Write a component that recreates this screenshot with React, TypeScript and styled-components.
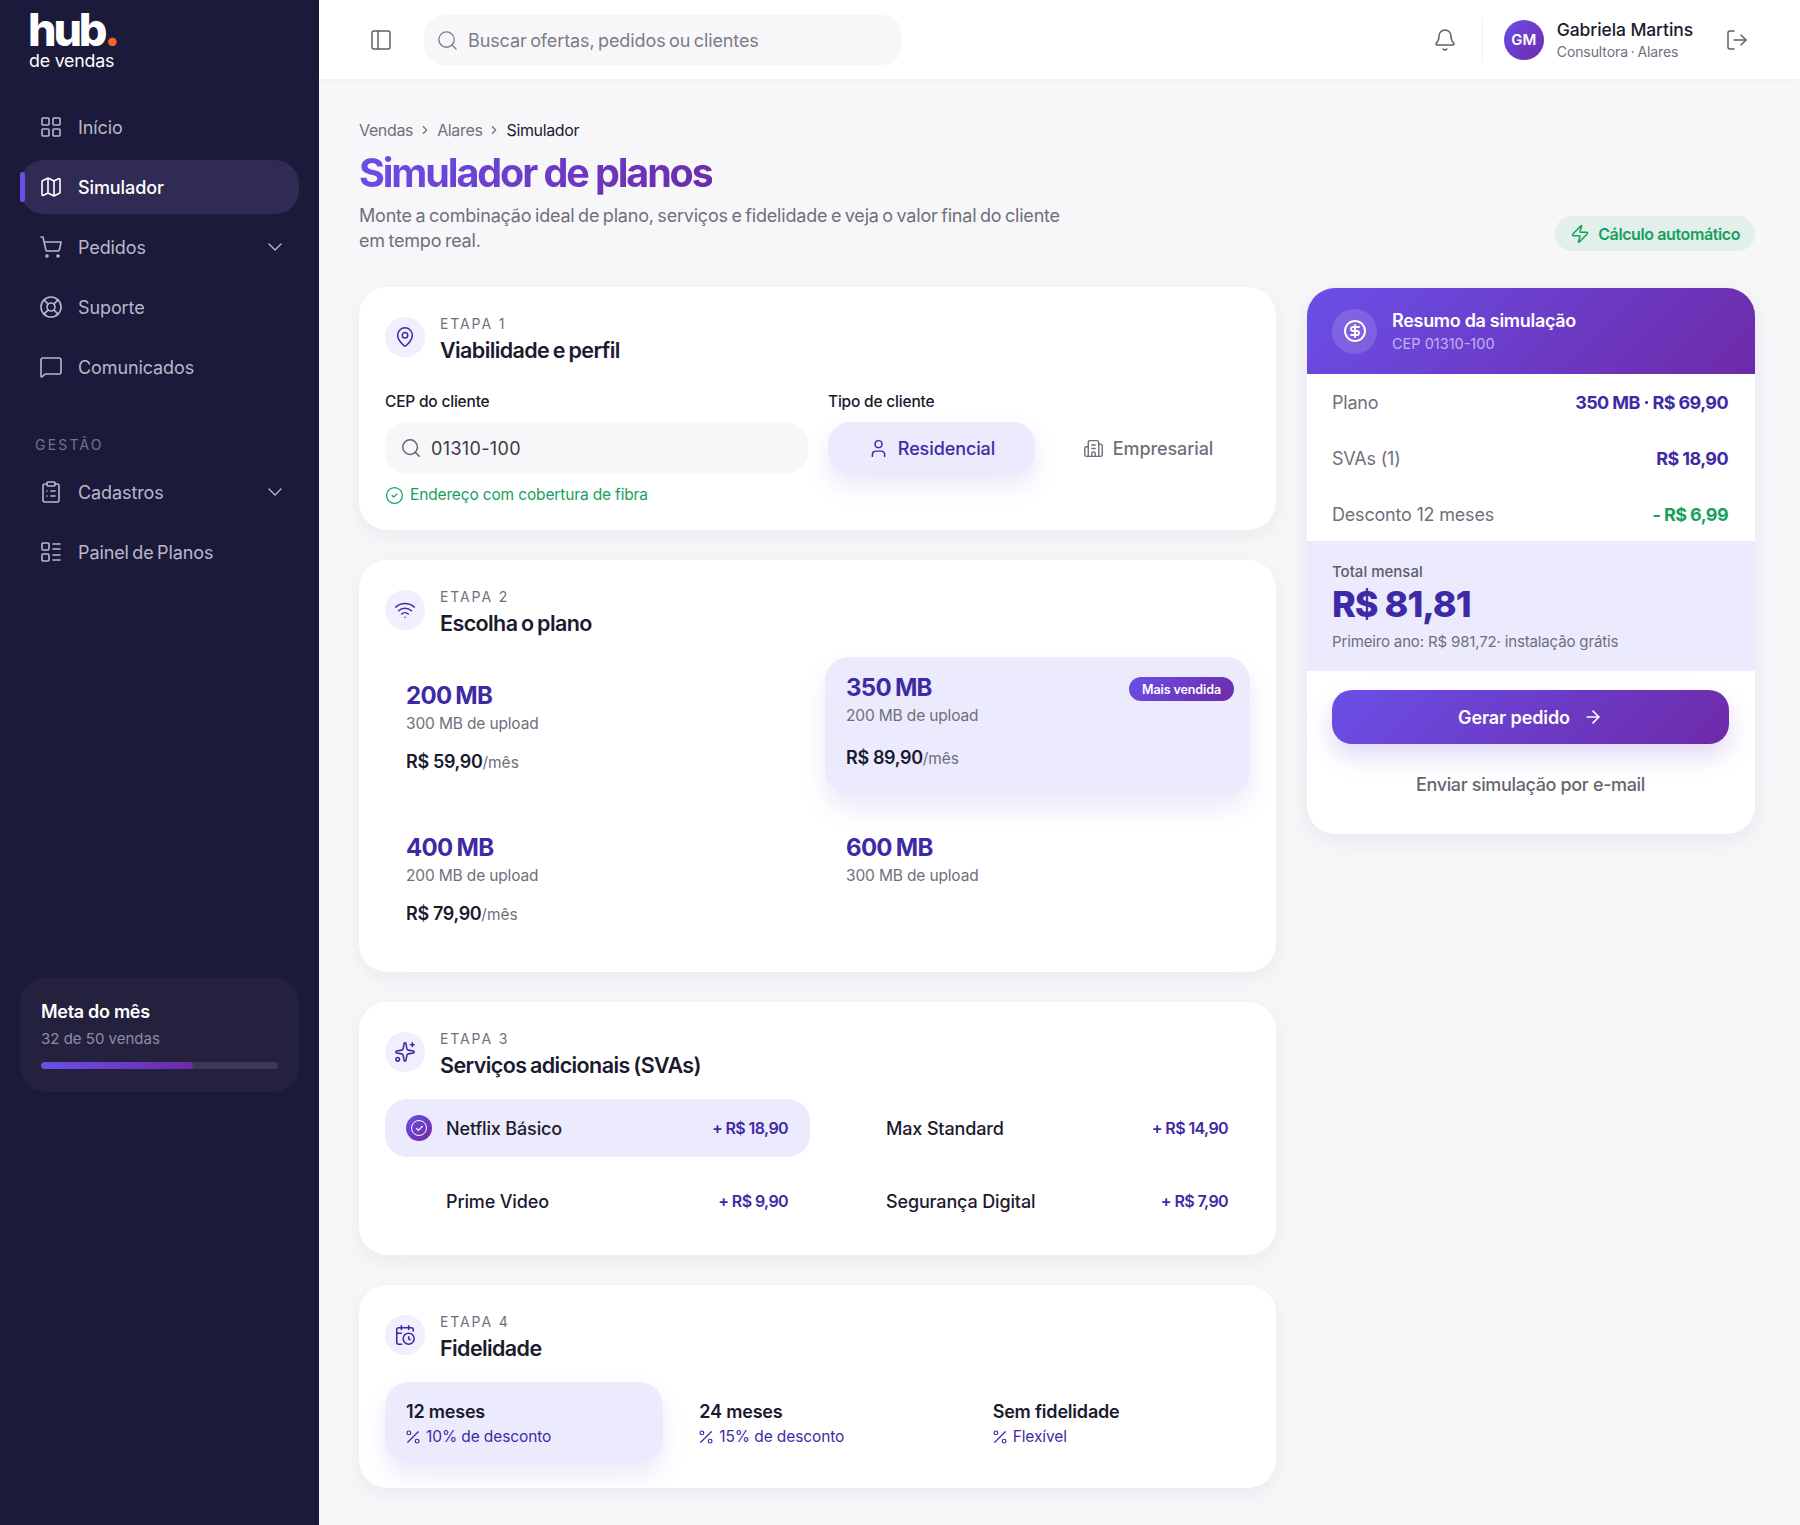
import React from 'react';
import styled, { createGlobalStyle } from 'styled-components';
import {
  LayoutGrid, Map, ShoppingCart, LifeBuoy, MessageSquare, ClipboardList, LayoutList, ChevronDown, ChevronRight,
  PanelLeft, Search, Bell, LogOut, Zap, CircleDollarSign, MapPin, User, Building2, CircleCheck, Wifi, Sparkles,
  CalendarClock, Percent, ArrowRight, Check,
} from 'lucide-react';

const GRAD = 'linear-gradient(135deg, #6a4fe8 0%, #6d2aa8 100%)';
const INK = '#1b1a2e';
const MUTED = '#6f6f7b';
const DEEP = '#3f2aa6';
const SOFT = '#ebebfd';
const GREEN = '#16a05d';

const Global = createGlobalStyle`
  html, body { margin: 0; padding: 0; background: #f7f7fa; }
  body { font-family: Inter, "Noto Sans", sans-serif; color: ${INK}; }
  * { box-sizing: border-box; }
`;

const Shell = styled.div`
  display: flex;
  min-height: 1525px;
  width: 1800px;
`;

const Sidebar = styled.aside`
  flex: none;
  width: 319px;
  background: #1c1a3a;
  color: #b9b7ca;
`;

const SidebarInner = styled.div`
  height: 1112px;
  display: flex;
  flex-direction: column;
  padding: 0 20px 20px;
`;

const Logo = styled.div`
  height: 100px;
  padding: 9px 0 0 9px;
  color: #fff;
`;

const LogoHub = styled.div`
  margin-left: -1px;
  font-size: 45px;
  line-height: 42px;
  font-weight: 800;
  letter-spacing: -3.2px;
  span { color: #f0652a; }
`;

const LogoSub = styled.div`
  font-size: 17.8px;
  line-height: 20px;
  letter-spacing: -0.2px;
`;

const NavGroup = styled.nav`
  display: flex;
  flex-direction: column;
  gap: 6px;
`;

const NavItem = styled.div<{ $active?: boolean }>`
  position: relative;
  display: flex;
  align-items: center;
  gap: 15px;
  height: 54px;
  padding: 0 12px 0 19px;
  border-radius: 24px;
  font-size: 18px;
  letter-spacing: -0.1px;
  word-spacing: -1.5px;
  font-weight: ${p => (p.$active ? 500 : 400)};
  color: ${p => (p.$active ? '#fff' : '#b9b7ca')};
  background: ${p => (p.$active ? '#2f2b54' : 'transparent')};
  ${p => p.$active && `
    &::before {
      content: '';
      position: absolute;
      left: 0;
      top: 12px;
      bottom: 12px;
      width: 5px;
      border-radius: 3px;
      background: #6a4fe8;
    }
  `}
`;

const NavLabel = styled.span`
  flex: 1;
`;

const SectionLabel = styled.div`
  margin: 41px 0 10px 15px;
  font-size: 14px;
  line-height: 20px;
  letter-spacing: 2.2px;
  color: #75738c;
`;

const GoalCard = styled.div`
  margin-top: auto;
  height: 114px;
  padding: 22px 21px 0;
  border-radius: 26px;
  background: #24213f;
`;

const GoalTitle = styled.div`
  color: #fff;
  font-size: 18px;
  line-height: 24px;
  font-weight: 600;
  letter-spacing: -0.3px;
`;

const GoalSub = styled.div`
  margin-top: 5px;
  font-size: 15px;
  line-height: 20px;
  color: #8e8ca3;
`;

const Track = styled.div`
  margin-top: 13px;
  height: 7px;
  border-radius: 4px;
  background: #3a3757;
  overflow: hidden;
`;

const TrackFill = styled.div`
  height: 100%;
  border-radius: 4px;
  background: linear-gradient(90deg, #6a4fe8, #6d2aa8);
`;

const Main = styled.div`
  flex: 1;
  min-width: 0;
`;

const Topbar = styled.header`
  height: 79px;
  display: flex;
  align-items: center;
  padding: 0 51px 0 50px;
  background: #fff;
  box-shadow: 0 1px 6px rgba(28, 26, 58, 0.03);
  color: #5f5f6b;
`;

const SearchBox = styled.div`
  display: flex;
  align-items: center;
  gap: 9px;
  width: 478px;
  height: 50px;
  margin-left: 31px;
  padding: 2px 12px 0;
  border-radius: 20px;
  background: #f7f7fa;
  color: #7c7c88;
  font-size: 18px;
  letter-spacing: -0.1px;
  word-spacing: -1.5px;
`;

const TopRight = styled.div`
  margin-left: auto;
  display: flex;
  align-items: center;
`;

const Divider = styled.div`
  width: 1px;
  height: 42px;
  margin: 0 21px 0 25px;
  background: #efeff3;
`;

const Avatar = styled.div`
  width: 40px;
  height: 40px;
  border-radius: 50%;
  display: flex;
  align-items: center;
  justify-content: center;
  background: ${GRAD};
  color: #fff;
  font-size: 15px;
  font-weight: 600;
`;

const UserBox = styled.div`
  margin: 0 32px 0 13px;
`;

const UserName = styled.div`
  font-size: 17.5px;
  line-height: 22px;
  font-weight: 500;
  letter-spacing: -0.1px;
  color: ${INK};
`;

const UserRole = styled.div`
  margin-top: 1px;
  font-size: 14px;
  line-height: 19px;
  letter-spacing: -0.1px;
  word-spacing: -1px;
  color: ${MUTED};
`;

const Content = styled.main`
  padding: 41px 45px 37px 40px;
`;

const Breadcrumb = styled.div`
  display: flex;
  align-items: center;
  gap: 5px;
  height: 20px;
  font-size: 16px;
  letter-spacing: -0.35px;
  color: ${MUTED};
  b { font-weight: 400; color: ${INK}; }
`;

const PageHead = styled.div`
  display: flex;
  justify-content: space-between;
  align-items: flex-end;
  margin-bottom: 34px;
`;

const Title = styled.h1`
  margin: 9px 0 0;
  font-size: 39.5px;
  line-height: 48px;
  font-weight: 700;
  letter-spacing: -2.1px;
  width: max-content;
  background: ${GRAD};
  -webkit-background-clip: text;
  background-clip: text;
  color: transparent;
`;

const Subtitle = styled.p`
  margin: 6px 0 0;
  max-width: 715px;
  font-size: 18px;
  line-height: 25px;
  letter-spacing: -0.2px;
  word-spacing: -1.25px;
  color: ${MUTED};
`;

const AutoPill = styled.div`
  display: flex;
  align-items: center;
  gap: 8px;
  height: 35px;
  margin-bottom: 2px;
  padding: 0 15px;
  border-radius: 18px;
  background: #e2efea;
  color: ${GREEN};
  font-size: 16px;
  font-weight: 600;
  letter-spacing: -0.4px;
`;

const Columns = styled.div`
  display: grid;
  grid-template-columns: 917px 448px;
  gap: 31px;
  align-items: start;
`;

const Stack = styled.div`
  display: flex;
  flex-direction: column;
  gap: 30px;
`;

const Card = styled.section`
  padding: 28px 26px 25px;
  border-radius: 28px;
  background: #fff;
  box-shadow: 0 6px 20px rgba(28, 26, 58, 0.06);
`;

const StepHead = styled.div`
  display: flex;
  align-items: flex-start;
  gap: 15px;
`;

const StepIcon = styled.div`
  flex: none;
  width: 40px;
  height: 40px;
  margin-top: 2px;
  border-radius: 50%;
  display: flex;
  align-items: center;
  justify-content: center;
  background: #efeffd;
  color: ${DEEP};
`;

const StepKicker = styled.div`
  font-size: 14px;
  line-height: 17px;
  letter-spacing: 1.9px;
  color: ${MUTED};
`;

const StepTitle = styled.h2`
  margin: 5px 0 0;
  font-size: 21.5px;
  line-height: 27px;
  font-weight: 600;
  letter-spacing: -0.6px;
  word-spacing: -1.2px;
  color: ${INK};
`;

const FormGrid = styled.div`
  display: grid;
  grid-template-columns: 423px 1fr;
  gap: 20px;
  margin-top: 28px;
`;

const FieldLabel = styled.div`
  margin-bottom: 10px;
  font-size: 15.5px;
  line-height: 20px;
  font-weight: 500;
  letter-spacing: -0.2px;
`;

const InputBox = styled.div`
  display: flex;
  align-items: center;
  gap: 9px;
  height: 52px;
  padding: 0 15px;
  border-radius: 22px;
  background: #f7f7fa;
  font-size: 18px;
  letter-spacing: 0.35px;
  color: #3a3a46;
`;

const Hint = styled.div`
  display: flex;
  align-items: center;
  gap: 6px;
  margin-top: 11px;
  font-size: 15.5px;
  line-height: 20px;
  color: ${GREEN};
  letter-spacing: -0.15px;
`;

const Segments = styled.div`
  display: grid;
  grid-template-columns: 207px 208px;
  gap: 7px;
`;

const Segment = styled.div<{ $active?: boolean }>`
  height: 52px;
  display: flex;
  align-items: center;
  justify-content: center;
  gap: 9px;
  padding-left: ${p => (p.$active ? '0' : '4px')};
  border-radius: 22px;
  font-size: 18px;
  font-weight: 500;
  letter-spacing: -0.1px;
  color: ${p => (p.$active ? DEEP : MUTED)};
  background: ${p => (p.$active ? SOFT : 'transparent')};
  box-shadow: ${p => (p.$active ? '0 12px 24px rgba(106, 60, 210, 0.13)' : 'none')};
`;

const PlanGrid = styled.div`
  display: grid;
  grid-template-columns: 1fr 1fr;
  gap: 15px;
  margin: 20px 0 1px;
`;

const PlanCard = styled.div<{ $active?: boolean }>`
  position: relative;
  height: 137px;
  padding: ${p => (p.$active ? '16px' : '24px')} 21px 0;
  border-radius: 24px;
  background: ${p => (p.$active ? SOFT : 'transparent')};
  box-shadow: ${p => (p.$active ? '0 14px 26px rgba(106, 60, 210, 0.12)' : 'none')};
`;

const PlanSpeed = styled.div`
  font-size: 24px;
  line-height: 30px;
  font-weight: 700;
  letter-spacing: -0.7px;
  word-spacing: -1px;
  color: ${DEEP};
`;

const PlanUpload = styled.div`
  margin-top: 3px;
  font-size: 15.5px;
  line-height: 20px;
  letter-spacing: -0.15px;
  color: ${MUTED};
`;

const PlanPrice = styled.div<{ $active?: boolean }>`
  margin-top: ${p => (p.$active ? '20px' : '16px')};
  font-size: 18px;
  line-height: 24px;
  font-weight: 600;
  letter-spacing: -0.35px;
  color: ${INK};
  span { font-size: 15.5px; font-weight: 400; letter-spacing: 0; color: ${MUTED}; }
`;

const Badge = styled.div`
  position: absolute;
  top: 20px;
  right: 16px;
  height: 24px;
  padding: 0 13px;
  display: flex;
  align-items: center;
  border-radius: 12px;
  background: ${GRAD};
  color: #fff;
  font-size: 12.5px;
  font-weight: 600;
  letter-spacing: -0.1px;
`;

const SvaGrid = styled.div`
  display: grid;
  grid-template-columns: 1fr 1fr;
  gap: 15px;
  margin-top: 20px;
`;

const Sva = styled.div<{ $active?: boolean }>`
  height: 58px;
  display: flex;
  align-items: center;
  padding: 0 22px 0 21px;
  border-radius: 22px;
  background: ${p => (p.$active ? SOFT : 'transparent')};
`;

const CheckSlot = styled.div`
  flex: none;
  width: 40px;
  display: flex;
`;

const CheckDot = styled.div`
  width: 26px;
  height: 26px;
  border-radius: 50%;
  display: flex;
  align-items: center;
  justify-content: center;
  background: ${GRAD};
  color: #fff;
`;

const CheckRing = styled.div`
  width: 16px;
  height: 16px;
  border-radius: 50%;
  border: 1.5px solid #fff;
  display: flex;
  align-items: center;
  justify-content: center;
`;

const SvaName = styled.div`
  flex: 1;
  font-size: 18px;
  font-weight: 500;
  letter-spacing: -0.15px;
`;

const SvaPrice = styled.div`
  font-size: 16px;
  font-weight: 600;
  color: ${DEEP};
  letter-spacing: -0.6px;
`;

const TermGrid = styled.div`
  display: grid;
  grid-template-columns: repeat(3, 1fr);
  gap: 15px;
  margin-top: 20px;
`;

const Term = styled.div<{ $active?: boolean }>`
  height: 81px;
  padding: 18px 21px 0;
  border-radius: 24px;
  background: ${p => (p.$active ? SOFT : 'transparent')};
  box-shadow: ${p => (p.$active ? '0 12px 24px rgba(106, 60, 210, 0.12)' : 'none')};
`;

const TermName = styled.div`
  font-size: 18px;
  line-height: 24px;
  font-weight: 600;
  letter-spacing: -0.2px;
`;

const TermSub = styled.div`
  display: flex;
  align-items: center;
  gap: 4px;
  margin: 2px 0 0 -2px;
  font-size: 15.5px;
  line-height: 22px;
  letter-spacing: -0.1px;
  color: ${DEEP};
`;

const Summary = styled.aside`
  margin-top: 1px;
  height: 546px;
  border-radius: 28px;
  overflow: hidden;
  background: #fff;
  box-shadow: 0 6px 22px rgba(28, 26, 58, 0.07);
`;

const SummaryHead = styled.div`
  height: 86px;
  display: flex;
  align-items: center;
  gap: 15px;
  padding: 0 25px;
  background: ${GRAD};
  color: #fff;
`;

const SummaryIcon = styled.div`
  width: 45px;
  height: 45px;
  border-radius: 50%;
  display: flex;
  align-items: center;
  justify-content: center;
  background: rgba(255, 255, 255, 0.14);
`;

const SummaryTitle = styled.div`
  font-size: 18px;
  line-height: 24px;
  font-weight: 600;
  letter-spacing: -0.3px;
`;

const SummarySub = styled.div`
  margin-top: 1px;
  font-size: 14.5px;
  line-height: 19px;
  color: rgba(255, 255, 255, 0.6);
`;

const Rows = styled.div`
  padding: 0 27px 0 25px;
`;

const Row = styled.div`
  height: 56px;
  display: flex;
  align-items: center;
  justify-content: space-between;
  font-size: 18px;
  color: ${MUTED};
  letter-spacing: -0.2px;
`;

const RowValue = styled.span<{ $green?: boolean }>`
  font-weight: 700;
  letter-spacing: -0.6px;
  color: ${p => (p.$green ? GREEN : DEEP)};
`;

const TotalBox = styled.div`
  height: 130px;
  margin-top: -1px;
  padding: 21px 25px 0;
  background: ${SOFT};
`;

const TotalLabel = styled.div`
  font-size: 15px;
  line-height: 20px;
  font-weight: 500;
  color: #5c5c68;
`;

const TotalValue = styled.div`
  font-size: 36px;
  line-height: 44px;
  font-weight: 800;
  letter-spacing: -1px;
  color: ${DEEP};
`;

const TotalNote = styled.div`
  margin-top: 6px;
  font-size: 15px;
  line-height: 20px;
  color: ${MUTED};
  letter-spacing: -0.15px;
`;

const Actions = styled.div`
  padding: 19px 26px 0 25px;
`;

const PrimaryButton = styled.button`
  width: 100%;
  height: 54px;
  border: 0;
  border-radius: 20px;
  display: flex;
  align-items: center;
  justify-content: center;
  gap: 13px;
  background: ${GRAD};
  color: #fff;
  font: 600 18px Inter, sans-serif;
  letter-spacing: -0.1px;
  box-shadow: 0 12px 24px rgba(106, 60, 210, 0.2);
`;

const SecondaryButton = styled.div`
  margin-top: 29px;
  text-align: center;
  font-size: 18px;
  line-height: 24px;
  font-weight: 500;
  letter-spacing: -0.35px;
  color: #66666f;
`;

const navTop = [
  { icon: LayoutGrid, label: 'Início' },
  { icon: Map, label: 'Simulador', active: true },
  { icon: ShoppingCart, label: 'Pedidos', chevron: true },
  { icon: LifeBuoy, label: 'Suporte' },
  { icon: MessageSquare, label: 'Comunicados' },
];
const navBottom = [
  { icon: ClipboardList, label: 'Cadastros', chevron: true },
  { icon: LayoutList, label: 'Painel de Planos' },
];

const plans = [
  { speed: '200 MB', up: '300 MB de upload', price: 'R$ 59,90' },
  { speed: '350 MB', up: '200 MB de upload', price: 'R$ 89,90', active: true },
  { speed: '400 MB', up: '200 MB de upload', price: 'R$ 79,90' },
  { speed: '600 MB', up: '300 MB de upload' },
];

const svas = [
  { name: 'Netflix Básico', price: '+ R$ 18,90', active: true },
  { name: 'Max Standard', price: '+ R$ 14,90' },
  { name: 'Prime Video', price: '+ R$ 9,90' },
  { name: 'Segurança Digital', price: '+ R$ 7,90' },
];

const terms = [
  { name: '12 meses', sub: '10% de desconto', active: true },
  { name: '24 meses', sub: '15% de desconto' },
  { name: 'Sem fidelidade', sub: 'Flexível' },
];

function NavEntry({ item }: { item: { icon: React.ElementType; label: string; active?: boolean; chevron?: boolean } }) {
  const Icon = item.icon;
  return (
    <NavItem $active={item.active}>
      <Icon size={24} strokeWidth={1.6} />
      <NavLabel>{item.label}</NavLabel>
      {item.chevron && <ChevronDown size={24} strokeWidth={1.4} />}
    </NavItem>
  );
}

function Step({ icon: Icon, n, title }: { icon: React.ElementType; n: number; title: string }) {
  return (
    <StepHead>
      <StepIcon><Icon size={22} strokeWidth={1.7} /></StepIcon>
      <div>
        <StepKicker>ETAPA {n}</StepKicker>
        <StepTitle>{title}</StepTitle>
      </div>
    </StepHead>
  );
}

export default function App() {
  return (
    <Shell>
      <Global />
      <Sidebar>
        <SidebarInner>
          <Logo>
            <LogoHub>hub<span>.</span></LogoHub>
            <LogoSub>de vendas</LogoSub>
          </Logo>
          <NavGroup>{navTop.map(i => <NavEntry key={i.label} item={i} />)}</NavGroup>
          <SectionLabel>GESTÃO</SectionLabel>
          <NavGroup>{navBottom.map(i => <NavEntry key={i.label} item={i} />)}</NavGroup>
          <GoalCard>
            <GoalTitle>Meta do mês</GoalTitle>
            <GoalSub>32 de 50 vendas</GoalSub>
            <Track><TrackFill style={{ width: `${(32 / 50) * 100}%` }} /></Track>
          </GoalCard>
        </SidebarInner>
      </Sidebar>
      <Main>
        <Topbar>
          <PanelLeft size={24} strokeWidth={1.5} />
          <SearchBox><Search size={23} strokeWidth={1.4} />Buscar ofertas, pedidos ou clientes</SearchBox>
          <TopRight>
            <Bell size={24} strokeWidth={1.5} />
            <Divider />
            <Avatar>GM</Avatar>
            <UserBox>
              <UserName>Gabriela Martins</UserName>
              <UserRole>Consultora · Alares</UserRole>
            </UserBox>
            <LogOut size={24} strokeWidth={1.5} />
          </TopRight>
        </Topbar>
        <Content>
          <Breadcrumb>
            Vendas <ChevronRight size={14} /> Alares <ChevronRight size={14} /> <b>Simulador</b>
          </Breadcrumb>
          <PageHead>
            <div>
              <Title>Simulador de planos</Title>
              <Subtitle>Monte a combinação ideal de plano, serviços e fidelidade e veja o valor final do cliente em tempo real.</Subtitle>
            </div>
            <AutoPill><Zap size={20} strokeWidth={1.8} />Cálculo automático</AutoPill>
          </PageHead>
          <Columns>
            <Stack>
              <Card>
                <Step icon={MapPin} n={1} title="Viabilidade e perfil" />
                <FormGrid>
                  <div>
                    <FieldLabel>CEP do cliente</FieldLabel>
                    <InputBox><Search size={22} strokeWidth={1.6} color="#5f5f6b" />01310-100</InputBox>
                    <Hint><CircleCheck size={19} strokeWidth={1.6} />Endereço com cobertura de fibra</Hint>
                  </div>
                  <div>
                    <FieldLabel>Tipo de cliente</FieldLabel>
                    <Segments>
                      <Segment $active><User size={21} strokeWidth={1.7} />Residencial</Segment>
                      <Segment><Building2 size={21} strokeWidth={1.6} />Empresarial</Segment>
                    </Segments>
                  </div>
                </FormGrid>
              </Card>
              <Card>
                <Step icon={Wifi} n={2} title="Escolha o plano" />
                <PlanGrid>
                  {plans.map(p => (
                    <PlanCard key={p.speed} $active={p.active}>
                      <PlanSpeed>{p.speed}</PlanSpeed>
                      <PlanUpload>{p.up}</PlanUpload>
                      {p.price && <PlanPrice $active={p.active}>{p.price}<span>/mês</span></PlanPrice>}
                      {p.active && <Badge>Mais vendida</Badge>}
                    </PlanCard>
                  ))}
                </PlanGrid>
              </Card>
              <Card>
                <Step icon={Sparkles} n={3} title="Serviços adicionais (SVAs)" />
                <SvaGrid>
                  {svas.map(s => (
                    <Sva key={s.name} $active={s.active}>
                      <CheckSlot>
                        {s.active && <CheckDot><CheckRing><Check size={9} strokeWidth={3} /></CheckRing></CheckDot>}
                      </CheckSlot>
                      <SvaName>{s.name}</SvaName>
                      <SvaPrice>{s.price}</SvaPrice>
                    </Sva>
                  ))}
                </SvaGrid>
              </Card>
              <Card>
                <Step icon={CalendarClock} n={4} title="Fidelidade" />
                <TermGrid>
                  {terms.map(t => (
                    <Term key={t.name} $active={t.active}>
                      <TermName>{t.name}</TermName>
                      <TermSub><Percent size={18} strokeWidth={1.6} />{t.sub}</TermSub>
                    </Term>
                  ))}
                </TermGrid>
              </Card>
            </Stack>
            <Summary>
              <SummaryHead>
                <SummaryIcon><CircleDollarSign size={24} strokeWidth={1.9} /></SummaryIcon>
                <div>
                  <SummaryTitle>Resumo da simulação</SummaryTitle>
                  <SummarySub>CEP 01310-100</SummarySub>
                </div>
              </SummaryHead>
              <Rows>
                <Row>Plano<RowValue>350 MB · R$ 69,90</RowValue></Row>
                <Row>SVAs (1)<RowValue>R$ 18,90</RowValue></Row>
                <Row>Desconto 12 meses<RowValue $green>- R$ 6,99</RowValue></Row>
              </Rows>
              <TotalBox>
                <TotalLabel>Total mensal</TotalLabel>
                <TotalValue>R$ 81,81</TotalValue>
                <TotalNote>Primeiro ano: R$ 981,72· instalação grátis</TotalNote>
              </TotalBox>
              <Actions>
                <PrimaryButton>Gerar pedido <ArrowRight size={20} strokeWidth={2} /></PrimaryButton>
                <SecondaryButton>Enviar simulação por e-mail</SecondaryButton>
              </Actions>
            </Summary>
          </Columns>
        </Content>
      </Main>
    </Shell>
  );
}
